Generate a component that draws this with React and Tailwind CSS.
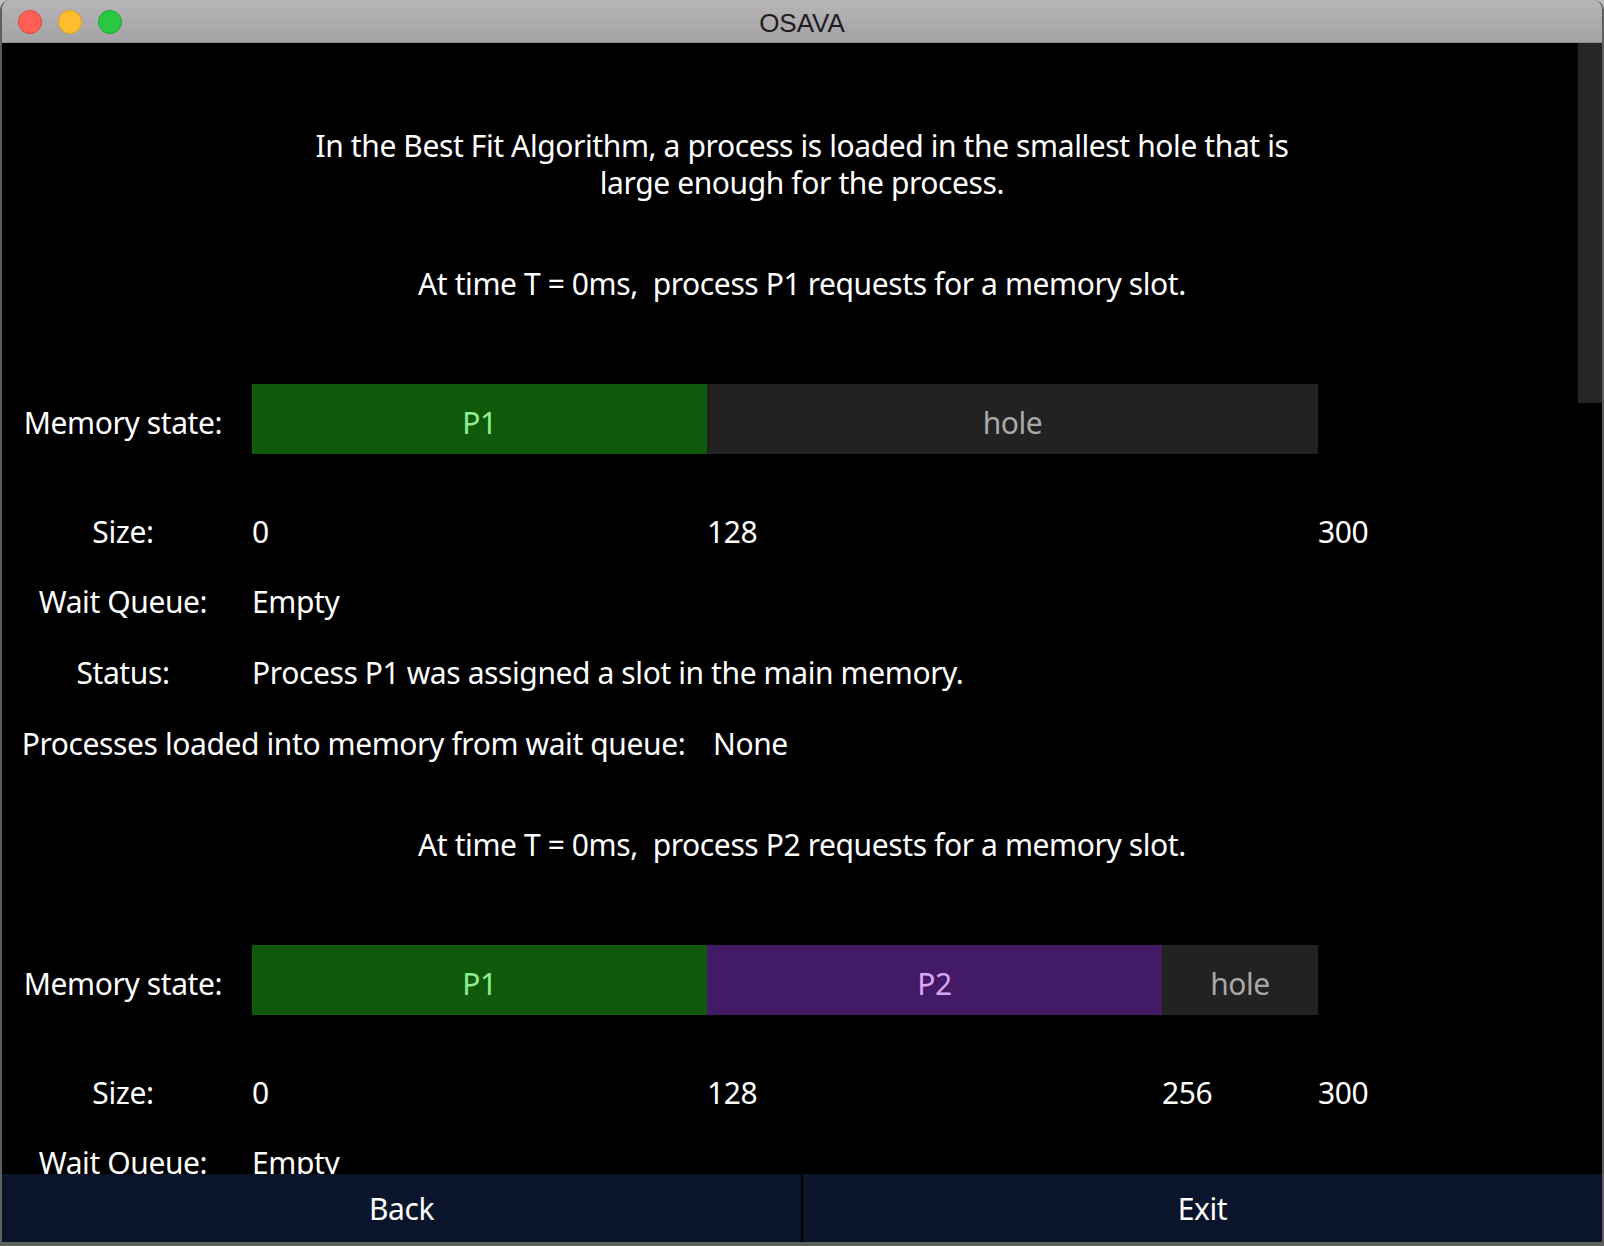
import React from "react";

const FONT = { fontFamily: '"Noto Sans", "DejaVu Sans", sans-serif', letterSpacing: "-0.4px" };

const TOTAL = 300;
const BAR_W = 1066;

const blocks = [
  {
    proc: "P1",
    segments: [
      { label: "P1", size: 128, bg: "bg-[#105a0c]", fg: "text-[#90ee90]" },
      { label: "hole", size: 172, bg: "bg-[#222222]", fg: "text-[#a8a8a8]" },
    ],
    marks: [0, 128],
    status: "Process P1 was assigned a slot in the main memory.",
  },
  {
    proc: "P2",
    segments: [
      { label: "P1", size: 128, bg: "bg-[#105a0c]", fg: "text-[#90ee90]" },
      { label: "P2", size: 128, bg: "bg-[#421a66]", fg: "text-[#d9a6f2]" },
      { label: "hole", size: 44, bg: "bg-[#222222]", fg: "text-[#a8a8a8]" },
    ],
    marks: [0, 128, 256],
    status: "Process P2 was assigned a slot in the main memory.",
  },
];

function Row({ label, children, className = "h-[71px]" }) {
  return (
    <div className={`flex items-center ${className}`}>
      <div className="w-[242px] shrink-0 text-center">{label}</div>
      <div className="ml-[8px] flex items-center">{children}</div>
    </div>
  );
}

function Block({ b }) {
  const px = (s) => Math.round((s / TOTAL) * BAR_W);
  const marks = b.marks;
  return (
    <div className="flex flex-col">
      <div className="h-[37px] pt-[2px] flex items-center justify-center whitespace-pre">
        {`At time T = 0ms,  process ${b.proc} requests for a memory slot.`}
      </div>
      <div className="h-[83px]" />
      <div className="flex h-[70px]">
        <div className="w-[242px] shrink-0 text-center flex items-center justify-center pt-[7px]">
          Memory state:
        </div>
        <div className="ml-[8px] flex h-[70px] w-[1066px]">
          {b.segments.map((s, i) => (
            <div
              key={i}
              className={`flex items-center justify-center h-full pt-[7px] ${s.bg} ${s.fg}`}
              style={{ width: px(s.size) }}
            >
              {s.label}
            </div>
          ))}
        </div>
      </div>
      <div className="h-[42px]" />
      <Row label="Size:" className="h-[70px]">
        <div className="flex w-[1066px]">
          {marks.map((m, i) => {
            const next = i + 1 < marks.length ? marks[i + 1] : TOTAL;
            return (
              <div key={i} style={{ width: px(next) - px(m) }}>
                {m}
              </div>
            );
          })}
        </div>
        <div>300</div>
      </Row>
      <Row label="Wait Queue:">
        <span>Empty</span>
      </Row>
      <Row label="Status:">
        <span>{b.status}</span>
      </Row>
      <div className="flex items-center h-[71px]">
        <div className="w-[703px] shrink-0 text-center">
          Processes loaded into memory from wait queue:
        </div>
        <div className="ml-[8px]">None</div>
      </div>
    </div>
  );
}

export default function App() {
  return (
    <div className="w-[1604px] h-[1246px] bg-[#bdbdbd] overflow-hidden">
      <div className="w-full h-full flex flex-col rounded-t-[10px] overflow-hidden border-x-2 border-b-4 border-[#5e5e5e]">
        {/* Title bar */}
        <div className="h-[43px] shrink-0 relative flex items-center justify-center pt-[3px] bg-gradient-to-b from-[#b6b4b6] to-[#a5a3a5] border-b border-[#8e8c8e]">
          <div className="absolute left-[16px] top-[10px] flex gap-[16px]">
            <div className="w-[24px] h-[24px] rounded-full bg-[#fe5f57] border border-[#e0443e]" />
            <div className="w-[24px] h-[24px] rounded-full bg-[#febc2e] border border-[#dea123]" />
            <div className="w-[24px] h-[24px] rounded-full bg-[#28c840] border border-[#1aab29]" />
          </div>
          <span
            className="text-[26px] text-[#1e1e1e] leading-none"
            style={{ fontFamily: '"Liberation Sans", Arial, sans-serif' }}
          >
            OSAVA
          </span>
        </div>

        {/* Content */}
        <div
          className="flex-1 relative overflow-hidden bg-black text-white text-[30px]"
          style={FONT}
        >
          <div className="flex flex-col pt-[84px]">
            <div className="text-center leading-[37px]">
              In the Best Fit Algorithm, a process is loaded in the smallest hole that is
              <br />
              large enough for the process.
            </div>
            <div className="h-[63px]" />
            <div className="flex flex-col gap-[46px]">
              {blocks.map((b, i) => (
                <Block key={i} b={b} />
              ))}
            </div>
          </div>
          {/* scrollbar thumb */}
          <div className="absolute right-0 top-0 w-[24px] h-[360px] bg-[#262626]" />
        </div>

        {/* Buttons */}
        <div
          className="h-[68px] shrink-0 flex bg-black text-white text-[30px]"
          style={FONT}
        >
          <button className="w-[799px] h-full bg-[#0a152b] flex items-center justify-center">
            Back
          </button>
          <div className="w-[2px]" />
          <button className="flex-1 h-full bg-[#0a152b] flex items-center justify-center">
            Exit
          </button>
        </div>
      </div>
    </div>
  );
}
